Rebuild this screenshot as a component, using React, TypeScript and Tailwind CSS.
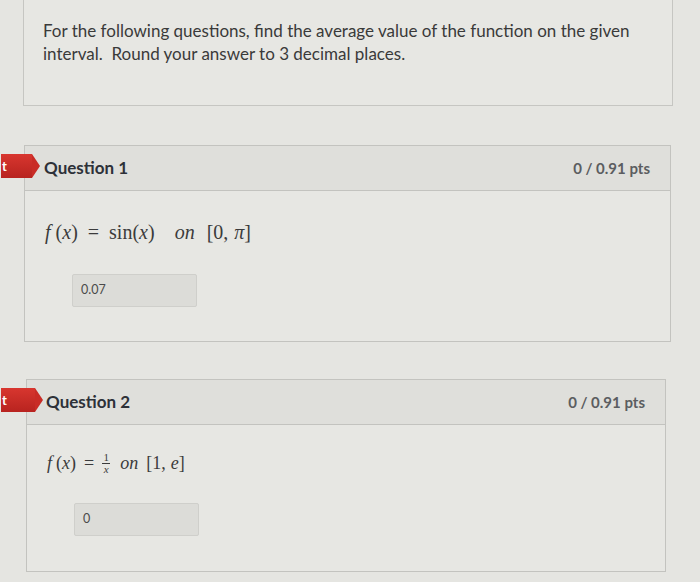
import React from 'react';

const serif = "font-['Liberation_Serif','DejaVu_Serif',serif]";

function Flag({ left, width }: { left: string; width: string }) {
  // red "incorrect" marker that pokes out from the left edge of the page
  return (
    <div className={`absolute top-[8px] flex h-[24px] items-center ${left}`}>
      <div className={`h-full ${width} bg-gradient-to-b from-[#d8362f] to-[#b8231f] pl-[1px] text-[13px] font-bold leading-[24px] text-white`}>t</div>
      <div className="h-0 w-0 border-y-[12px] border-l-[8px] border-y-transparent border-l-[#c92c26]" />
    </div>
  );
}

function QuestionCard({
  title,
  points,
  answer,
  box,
  body,
  formulaTop,
  inputTop,
  flag,
  children,
}: {
  title: string;
  points: string;
  answer: string;
  box: string;
  body: string;
  formulaTop: string;
  inputTop: string;
  flag: React.ReactNode;
  children: React.ReactNode;
}) {
  return (
    <div className={`relative border border-[#c3c3bf] bg-[#e7e7e3] ${box}`}>
      {flag}
      <div className="flex h-[45px] items-center justify-between border-b border-[#c3c3bf] bg-[#dfdfdb] pl-[19px] pr-[20px]">
        <span className="text-[17px] font-bold text-[#2d3138]">{title}</span>
        <span className="text-[15px] font-bold text-[#5b5d60]">{points}</span>
      </div>
      <div className={`pl-[20px] ${body} ${formulaTop}`}>
        <div className={`${serif} flex h-[26px] items-center text-[20px] text-[#3b3b3b]`}>{children}</div>
        <div className={`ml-[27px] flex h-[33px] w-[125px] items-center rounded-[2px] border border-[#cfcfcb] bg-[#dcdcd8] pl-[8px] text-[12.5px] text-[#4a4a4a] ${inputTop}`}>
          {answer}
        </div>
      </div>
    </div>
  );
}

export default function App() {
  return (
    <div className="min-h-[582px] w-[700px] overflow-hidden bg-[#e5e5e1] font-['Lato','Open_Sans',sans-serif]">
      <div className="ml-[23px] h-[106px] w-[650px] border-x border-b border-[#c6c6c2] bg-[#e7e7e3] pl-[19px] pt-[19px] text-[17px] leading-[23px] text-[#3a3a3a]">
        For the following questions, find the average value of the function on the given
        <br />
        interval.&nbsp; Round your answer to 3 decimal places.
      </div>

      <div className="mt-[39px]">
        <QuestionCard
          title="Question 1"
          points="0 / 0.91 pts"
          answer="0.07"
          box="ml-[24px] w-[647px]"
          body="h-[150px]"
          formulaTop="pt-[28px]"
          inputTop="mt-[29px]"
          flag={<Flag left="left-[-24px]" width="w-[31px]" />}
        >
          <span className="italic">f</span>
          <span className="ml-[5px]">(</span>
          <span className="italic">x</span>
          <span>)</span>
          <span className="mx-[10px]">=</span>
          <span>sin(</span>
          <span className="italic">x</span>
          <span>)</span>
          <span className="ml-[20px] italic">on</span>
          <span className="ml-[12px]">[0,</span>
          <span className="ml-[6px] italic">π</span>
          <span>]</span>
        </QuestionCard>
      </div>

      <div className="mt-[37px]">
        <QuestionCard
          title="Question 2"
          points="0 / 0.91 pts"
          answer="0"
          box="ml-[26px] w-[640px]"
          body="h-[146px]"
          formulaTop="pt-[25px]"
          inputTop="mt-[27px]"
          flag={<Flag left="left-[-26px]" width="w-[34px]" />}
        >
          <span className="text-[18px] italic">f</span>
          <span className="ml-[4px] text-[18px]">(</span>
          <span className="text-[18px] italic">x</span>
          <span className="text-[18px]">)</span>
          <span className="mx-[8px] text-[18px]">=</span>
          <span className="inline-flex flex-col items-center text-[11px] leading-[11px]">
            <span>1</span>
            <span className="w-[8px] border-t border-[#3b3b3b]" />
            <span className="italic">x</span>
          </span>
          <span className="ml-[10px] text-[18px] italic">on</span>
          <span className="ml-[8px] text-[18px]">[1,</span>
          <span className="ml-[5px] text-[18px] italic">e</span>
          <span className="text-[18px]">]</span>
        </QuestionCard>
      </div>
    </div>
  );
}
